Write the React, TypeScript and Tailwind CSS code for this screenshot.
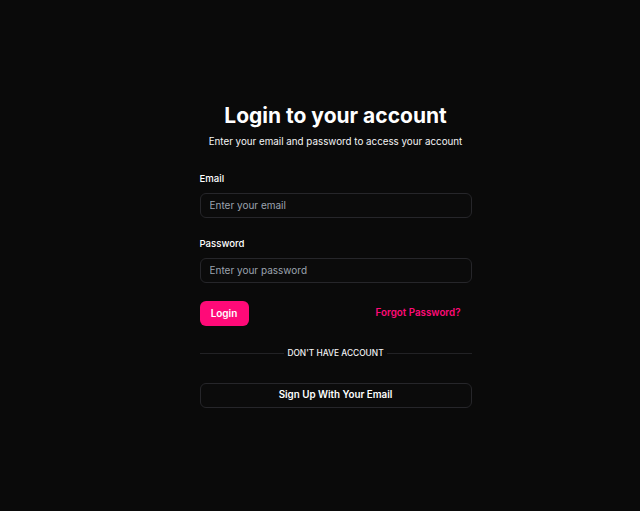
export default function App() {
  return (
    <div
      className="min-h-screen bg-[#0a0a0a] flex items-center justify-center pl-[31px] pb-[2px] text-white"
      style={{ fontFamily: 'Inter, "Noto Sans", sans-serif' }}
    >
      <div className="w-[272px] flex flex-col">
        <h1 className="text-center text-[21px] leading-[28px] font-bold">Login to your account</h1>
        <p className="mt-[4px] text-center text-[9.8px] leading-[16px] text-[#f4f4f5]">
          Enter your email and password to access your account
        </p>

        <label className="mt-[21px] text-[9.6px] leading-[16px] font-medium">Email</label>
        <input
          type="email"
          placeholder="Enter your email"
          className="mt-[6px] h-[25px] w-full rounded-[6px] border border-[#26262a] bg-[#0b0b0b] px-[9px] text-[10px] text-white placeholder:text-[#9ca3af] outline-none"
        />

        <label className="mt-[18px] text-[9.6px] leading-[16px] font-medium">Password</label>
        <input
          type="password"
          placeholder="Enter your password"
          className="mt-[6px] h-[25px] w-full rounded-[6px] border border-[#26262a] bg-[#0b0b0b] px-[9px] text-[10px] text-white placeholder:text-[#9ca3af] outline-none"
        />

        <div className="mt-[18px] flex items-center justify-between">
          <button className="h-[25px] w-[49px] rounded-[6px] bg-[#ff0a78] text-[10px] font-semibold text-white">
            Login
          </button>
          <button className="mr-[11px] text-[9.8px] font-semibold text-[#ff0a78]">Forgot Password?</button>
        </div>

        <div className="mt-[20px] flex h-[16px] items-center gap-[3px]">
          <div className="h-px flex-1 bg-[#222225]" />
          <span className="text-[8.4px] font-medium uppercase text-[#f4f4f5]">Don&apos;t have account</span>
          <div className="h-px flex-1 bg-[#222225]" />
        </div>

        <button className="mt-[21px] h-[25px] w-full rounded-[6px] border border-[#26262a] bg-[#0b0b0b] text-[9.8px] font-semibold text-white">
          Sign Up With Your Email
        </button>
      </div>
    </div>
  );
}
